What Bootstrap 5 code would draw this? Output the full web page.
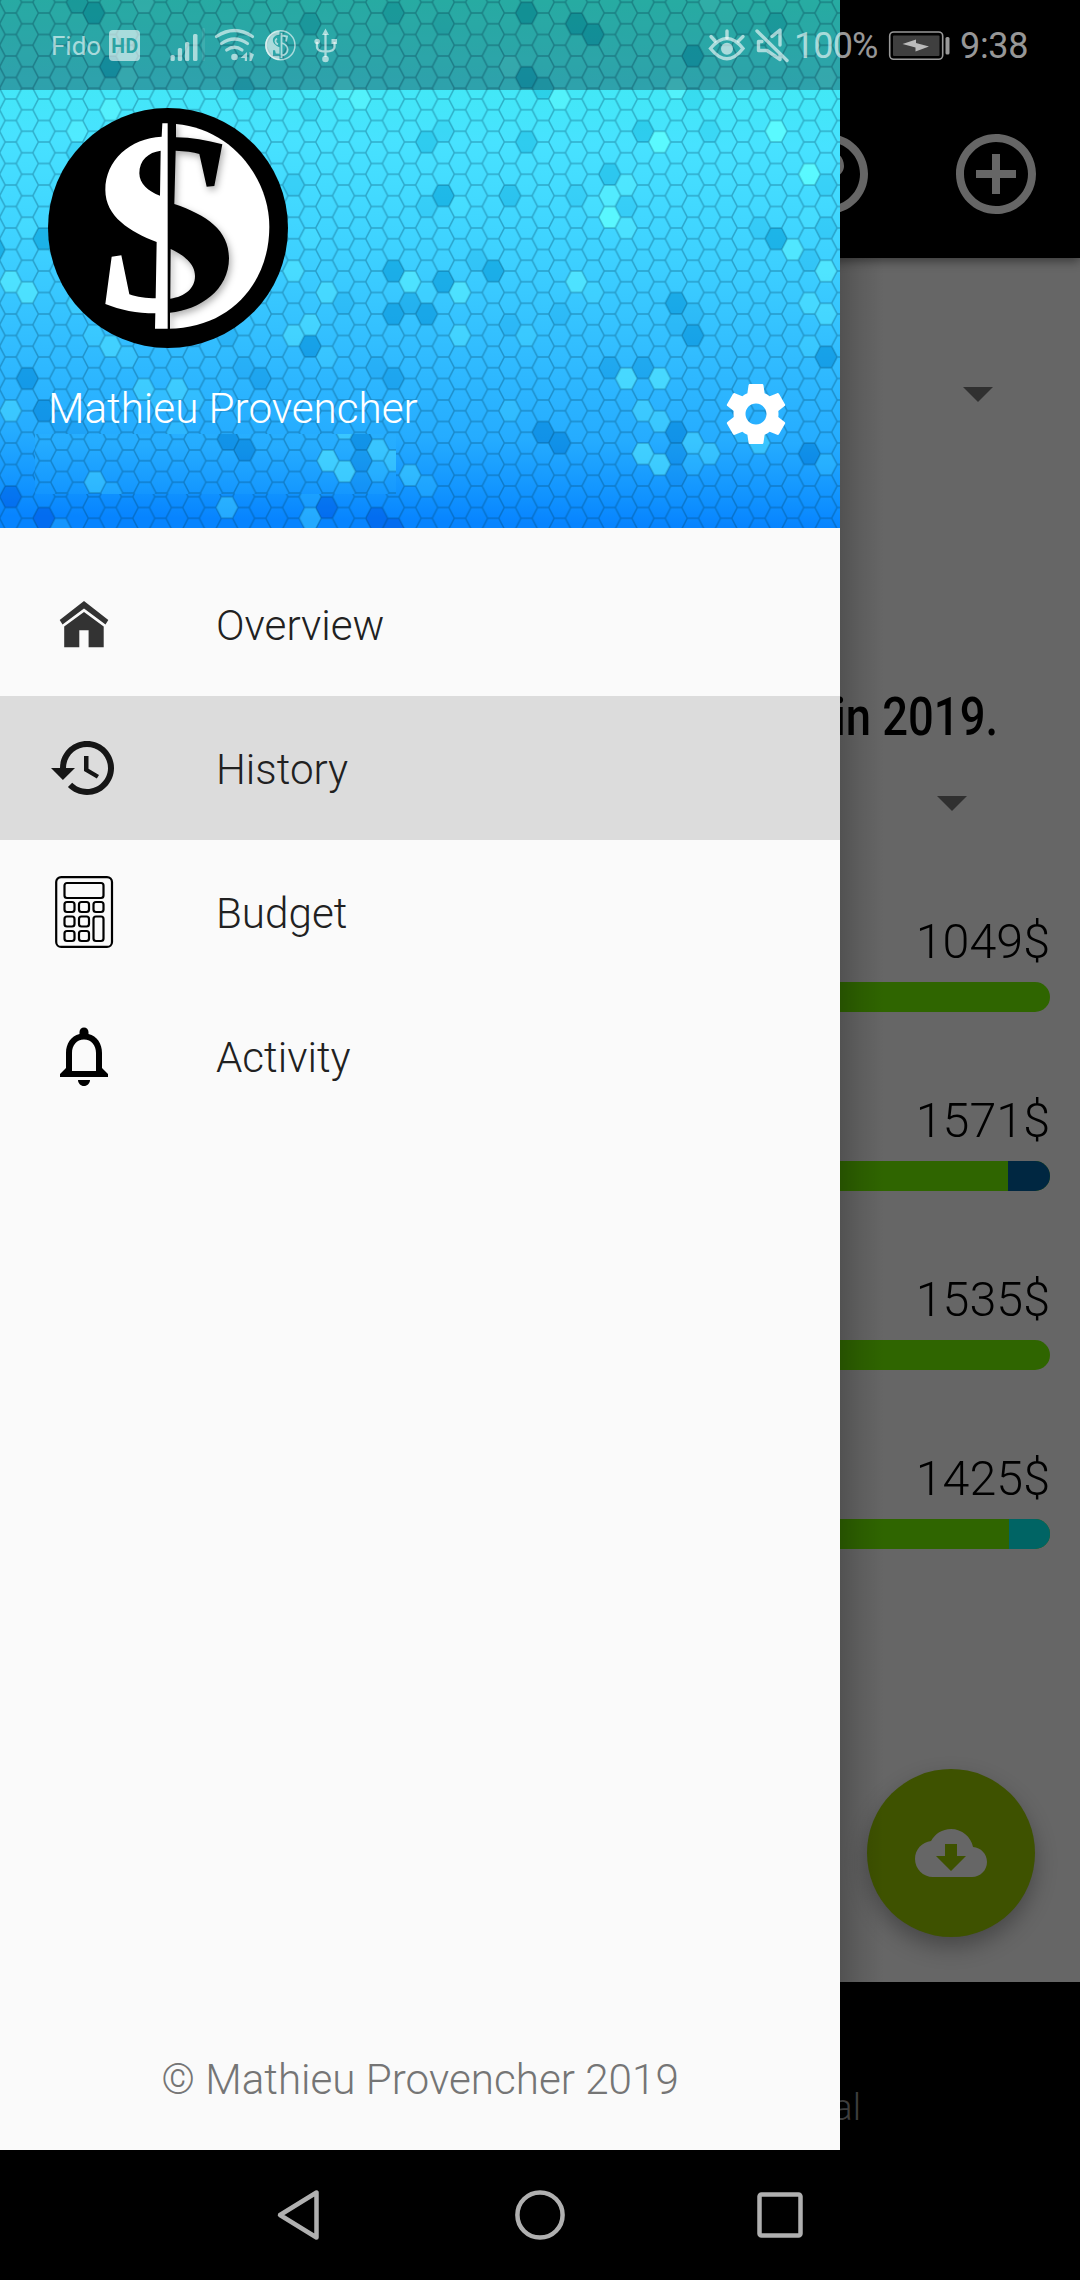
<!DOCTYPE html>
<html lang="en">
<head>
<meta charset="utf-8">
<meta name="viewport" content="width=device-width, initial-scale=1">
<title>History</title>
<link href="https://cdn.jsdelivr.net/npm/bootstrap@5.3.0/dist/css/bootstrap.min.css" rel="stylesheet">
<style>
  body{margin:0;background:#000;font-family:Roboto,"Liberation Sans",sans-serif;font-weight:300}
  svg{display:block;flex:none}
  .phone{width:1080px;height:2280px;overflow:hidden;background:#000}
  /* status bar */
  .statusbar{height:90px;z-index:30;color:rgba(255,255,255,.6);font-weight:400;line-height:92px}
  .statusbar .shade{width:840px;height:90px;background:rgba(0,0,0,.3);z-index:-1}
  .carrier{font-size:26px;padding-left:51px;width:109px}
  .clock{font-size:36px;letter-spacing:-.3px}
  .charge{width:93px;letter-spacing:-.9px}
  .time{width:120px}
  /* app behind the drawer */
  .appbar{height:258px;padding:126px 36px 0 0;gap:72px;box-shadow:0 3px 10px rgba(0,0,0,.45);z-index:2}
  .content-pane{height:1724px;background:#666;padding-right:30px;color:#000}
  .arrow-down{width:30px;height:15px;background:#303030;clip-path:polygon(0 0,100% 0,50% 100%)}
  .pick-year{padding:129px 57px 0 0}
  .pick-month{padding:47px 83px 0 0}
  .headline{font-size:54px;line-height:64px;height:64px;font-weight:500;margin-top:283px;padding-right:52px}
  .headline span{display:inline-block;transform:scaleX(.84);transform-origin:100% 50%}
  .month-row{height:179px}
  .amount{font-size:48.4px;line-height:68px;height:74px;white-space:nowrap}
  .track{height:30px;border-radius:15px;background:#2f6500}
  .months{padding-top:97px}
  .c-navy{background:#002741}
  .c-teal{background:#006464}
  .fab{right:45px;top:1769px;width:168px;height:168px;background:#3e5200;box-shadow:0 10px 22px rgba(0,0,0,.3);z-index:3}
  .tabbar{height:168px;color:#3d3d3d;font-size:37px;font-weight:300;line-height:44px;padding:104px 0 0 0;width:861px}
  .sysnav{height:130px;gap:190px;z-index:5}
  /* drawer */
  .scrim-edge{left:840px;top:258px;width:44px;height:1724px;z-index:4;background:linear-gradient(90deg,rgba(0,0,0,.2),rgba(0,0,0,.09) 45%,rgba(0,0,0,0))}
  .drawer{width:840px;height:2150px;background:#fafafa;z-index:20;color:#212121;font-size:42.2px}
  .drawer-head{height:528px;padding:108px 48px 0;color:#fff}
  .hexes{z-index:0}
  .avatar,.who{z-index:1}
  .who{height:72px;margin-top:30px;line-height:62px}
  .menu{padding-top:24px}
  .menu .nav-link{height:144px;padding:0 48px;gap:96px;color:inherit;line-height:50px}
  .menu .nav-link span{padding-top:3px}
  .menu .nav-link.active{background:#dcdcdc}
  .credit{color:#757575;line-height:50px;padding-bottom:45px}
</style>
<script src="https://cdn.jsdelivr.net/npm/bootstrap@5.3.0/dist/js/bootstrap.bundle.min.js"></script>
</head>
<body>
<div class="phone position-relative d-flex flex-column">

  <div class="statusbar position-absolute top-0 start-0 w-100 d-flex">
    <div class="shade position-absolute top-0 start-0"></div>
    <span class="carrier">Fido</span>
    <svg width="240" height="90" viewBox="109 0 240 90" fill="currentColor">
      <rect x="109" y="30" width="31" height="31" rx="4"/>
      <text x="124.7" y="52.6" text-anchor="middle" font-size="19.5" font-weight="700" fill="#2ba3a3" textLength="27">HD</text>
      <rect x="170.5" y="55" width="4.3" height="6" rx="1.5"/><rect x="177.8" y="48" width="4.3" height="13" rx="1.5"/><rect x="185" y="42" width="4.3" height="19" rx="1.5"/><rect x="193" y="34" width="4.5" height="27" rx="1.5"/><rect x="202" y="28" width="3" height="33" rx="1" opacity=".15"/>
      <g fill="none" stroke="currentColor" stroke-width="3.2" stroke-linecap="round"><path d="M216.500 36.500Q234.500 24.500 252.500 36.500M221.500 43.500Q234.500 34.500 247.500 43.500M226.700 50Q234.500 44.500 242 50"/></g>
      <circle cx="234.500" cy="57" r="3.3"/><path d="M247 52v9h-2.200v-3h-4.300zM249.500 52l4.500 2.500-2.500 6.500h-2z"/>
      <circle cx="280.500" cy="45.300" r="14.500" fill="none" stroke="currentColor" stroke-width="1.500"/>
      <path d="M279.500 31a14.500 14.500 0 0 0 0 29v-4.200h-6.500v-5.600h2l.8 3.200 3.700.4v-6.500c-9-3.500-8.500-11.800 0-12.500z" />
      <g fill="none" stroke="currentColor" stroke-width="1.800"><path d="M282 35.500l5 1-1 5M282 43c8 3 7 11 0 12.500M281.500 33v25M277 38.500c-2.500 1.500-2 4.500 1 6"/></g>
      <g fill="none" stroke="currentColor" stroke-width="2.300"><path d="M325.500 34v23M317 42v5q0 4.500 8.500 4.500M334.500 42v5q0 4.500-9 4.500"/></g>
      <path d="M325.500 28.500l3.500 6.500h-7zM331.500 39h5.500v5h-5.500z"/><circle cx="317.200" cy="41.500" r="2.800"/><circle cx="325.500" cy="59" r="3.300"/>
    </svg>
    <svg class="ms-auto" width="91" height="90" viewBox="703 0 91 90" fill="none" stroke="currentColor" stroke-width="3.400" stroke-linecap="round">
      <path d="M710.500 48.500Q727 28.500 743 48.500Q727 69 710.500 48.500z"/><circle cx="727" cy="48.800" r="6" fill="currentColor" stroke="none"/><path d="M727 31v7M711 36.500l4 4.500M743 36.500l-4.500 4.500"/>
      <path d="M757 31l30 29.500M762 41.500h-3.500v9h8.500L780 59.500v-5M772 36.500l8-6.500v15" stroke-linejoin="round"/>
    </svg>
    <span class="clock charge">100%</span>
    <svg width="73" height="90" viewBox="887 0 73 90" fill="none" stroke="currentColor">
      <rect x="889.700" y="32" width="53" height="27.300" rx="4" stroke-width="1.600"/><rect x="893" y="35.500" width="46.500" height="20.500" rx="1" fill="#3f3f3f" stroke="none"/><path d="M902.500 44l13.500-4.500v3.500l13 3.500-13.500 5v-4z" fill="#bbb" stroke="none"/><rect x="945.500" y="37" width="4" height="17.500" rx="1.500" fill="currentColor" stroke="none"/>
    </svg>
    <span class="clock time">9:38</span>
  </div>

  <header class="appbar position-relative d-flex justify-content-end bg-black">
    <svg width="96" height="96" viewBox="0 0 24 24" fill="#666"><path d="M11 18h2v-2h-2v2zm1-16C6.480 2 2 6.480 2 12s4.480 10 10 10 10-4.480 10-10S17.520 2 12 2zm0 18c-4.410 0-8-3.590-8-8s3.590-8 8-8 8 3.590 8 8-3.590 8-8 8zm0-14c-2.210 0-4 1.790-4 4h2c0-1.100.9-2 2-2s2 .9 2 2c0 2-3 1.750-3 5h2c0-2.250 3-2.500 3-5 0-2.210-1.790-4-4-4z"/></svg>
    <svg width="96" height="96" viewBox="0 0 24 24" fill="#666"><path d="M13 7h-2v4H7v2h4v4h2v-4h4v-2h-4V7zm-1-5C6.480 2 2 6.480 2 12s4.480 10 10 10 10-4.480 10-10S17.520 2 12 2zm0 18c-4.410 0-8-3.590-8-8s3.590-8 8-8 8 3.590 8 8-3.590 8-8 8z"/></svg>
  </header>

  <main class="content-pane">
    <div class="pick-year d-flex justify-content-end"><div class="arrow-down"></div></div>
    <div class="headline text-end"><span>in 2019.</span></div>
    <div class="pick-month d-flex justify-content-end"><div class="arrow-down"></div></div>
    <div class="months">
      <div class="month-row"><div class="amount text-end">1049$</div><div class="track"></div></div>
      <div class="month-row"><div class="amount text-end">1571$</div><div class="track d-flex justify-content-end overflow-hidden"><div class="c-navy" style="width:42px"></div></div></div>
      <div class="month-row"><div class="amount text-end">1535$</div><div class="track"></div></div>
      <div class="month-row"><div class="amount text-end">1425$</div><div class="track d-flex justify-content-end overflow-hidden"><div class="c-teal" style="width:41px"></div></div></div>
    </div>
  </main>
  <div class="fab position-absolute rounded-circle d-flex align-items-center justify-content-center">
    <svg width="72" height="72" viewBox="0 0 24 24" fill="#666"><path d="M19.350 10.040C18.670 6.590 15.640 4 12 4 9.110 4 6.600 5.640 5.350 8.040 2.340 8.360 0 10.910 0 14c0 3.310 2.690 6 6 6h13c2.760 0 5-2.240 5-5 0-2.640-2.050-4.780-4.650-4.960zM17 13l-5 5-5-5h3V9h4v4h3z"/></svg>
  </div>
  <div class="tabbar text-end">al</div>
  <div class="scrim-edge position-absolute"></div>

  <nav class="sysnav d-flex justify-content-center align-items-center bg-black">
    <svg width="50" height="54" viewBox="0 0 50 54" fill="none" stroke="#b0b0b0" stroke-width="4.500" stroke-linejoin="round"><path d="M5 27L41.500 4.500v45z"/></svg>
    <svg width="50" height="54" viewBox="0 0 50 54" fill="none" stroke="#b0b0b0" stroke-width="4.500"><circle cx="25" cy="27" r="22.600"/></svg>
    <svg width="50" height="54" viewBox="0 0 50 54" fill="none" stroke="#b0b0b0" stroke-width="4.500"><rect x="4.500" y="6.500" width="41" height="41" rx="2"/></svg>
  </nav>

  <aside class="drawer position-absolute top-0 start-0 d-flex flex-column">
    <div class="drawer-head position-relative overflow-hidden">
      <svg class="hexes position-absolute top-0 start-0" width="840" height="528" viewBox="0 0 840 528">
        <defs>
          <linearGradient id="sky" gradientUnits="userSpaceOnUse" x1="840" y1="0" x2="832" y2="528">
            <stop offset="0" stop-color="#38f6e8"/><stop offset=".17" stop-color="#42e8f6"/><stop offset=".28" stop-color="#47e2ff"/><stop offset=".5" stop-color="#3dd0ff"/><stop offset=".68" stop-color="#31bcff"/><stop offset=".84" stop-color="#25acff"/><stop offset=".95" stop-color="#1092ff"/><stop offset="1" stop-color="#0784ff"/>
          </linearGradient>
          <pattern id="comb" patternUnits="userSpaceOnUse" x="-6" y="2.250" width="33.280" height="21.500">
            <path fill="none" stroke-width="1.500" d="M0 0H5.550L11.100 10.750L5.550 21.500H0M11.100 10.750H22.200L27.750 0H33.280M22.200 10.750L27.750 21.500H33.280" stroke="#003c5a" stroke-opacity=".33"/>
          </pattern>
          <clipPath id="strip"><rect x="35" y="434" width="361" height="60"/></clipPath>
        </defs>
        <g id="field"><rect width="840" height="528" fill="url(#sky)"/><g id="tinted"></g><rect width="840" height="528" fill="url(#comb)"/></g>
        <g clip-path="url(#strip)"><use href="#field" transform="translate(-315 7)"/></g>
      </svg>
      <svg class="avatar position-relative" width="240" height="240" viewBox="144 324 720 720">
        <defs><filter id="soft" x="-20%" y="-20%" width="150%" height="150%"><feDropShadow dx="6" dy="10" stdDeviation="11" flood-opacity=".32"/></filter></defs>
        <circle cx="504" cy="684" r="360"/>
        <path fill="#fff" d="M505 372H528C690 385 808 530 808 680C808 850 690 985 505 986Z"/>
        <path filter="url(#soft)" fill-rule="evenodd" d="M500 366H528V412C575 413 620 420 667 433L643 558L620 560L598 462C580 456 555 453 527 452L523 612C620 645 687 690 687 775C687 870 600 930 510 938V990H500ZM512 747L511 896C555 890 585 865 585 828C585 790 550 765 512 747Z"/>
        <path fill="#fff" fill-rule="evenodd" d="M487 370H503V986H465L466 940C410 940 360 930 316 912L335 770L364 766L388 883C410 891 440 895 467 895L470 726C390 695 316 650 316 570C316 480 390 415 485 410ZM482 452C445 457 418 480 418 520C418 550 445 575 480 587Z"/>
      </svg>
      <div class="who position-relative d-flex justify-content-between">
        <span>Mathieu Provencher</span>
        <svg width="72" height="72" viewBox="0 0 24 24" fill="#fff"><path d="M19.430 12.980c.04-.32.07-.64.07-.98s-.03-.66-.07-.98l2.110-1.650c.19-.15.24-.42.12-.64l-2-3.460c-.12-.22-.39-.3-.61-.22l-2.490 1c-.52-.4-1.080-.73-1.690-.98l-.38-2.650C14.460 2.180 14.250 2 14 2h-4c-.25 0-.46.18-.49.42l-.38 2.650c-.61.25-1.170.59-1.690.98l-2.490-1c-.23-.09-.49 0-.61.22l-2 3.460c-.13.22-.07.49.12.64l2.110 1.650c-.04.32-.07.65-.07.98s.03.66.07.98l-2.110 1.650c-.19.15-.24.42-.12.64l2 3.460c.12.22.39.3.61.22l2.490-1c.52.4 1.080.73 1.690.98l.38 2.650c.03.24.24.42.49.42h4c.25 0 .46-.18.49-.42l.38-2.650c.61-.25 1.170-.59 1.690-.98l2.490 1c.23.09.49 0 .61-.22l2-3.460c.12-.22.07-.49-.12-.64l-2.110-1.650zM12 15.500c-1.930 0-3.500-1.570-3.500-3.500s1.570-3.500 3.500-3.500 3.500 1.570 3.500 3.500-1.570 3.500-3.500 3.500z"/></svg>
      </div>
    </div>
    <nav class="menu nav flex-column flex-grow-1 flex-nowrap">
      <a class="nav-link d-flex align-items-center">
        <svg width="72" height="72" fill="#333"><path d="M36 13L60.300 32L57.500 36.500L36 20.500L14.500 36.500L11.700 32Z"/><path d="M36 24L55.700 38.500V59.300H40.600V42.300H31.300V59.300H16.200V38.500Z"/></svg>
        <span>Overview</span></a>
      <a class="nav-link active d-flex align-items-center">
        <svg width="72" height="72" viewBox="0 0 24 24" fill="#161616"><path d="M13 3c-4.970 0-9 4.030-9 9H1l3.890 3.890.07.14L9 12H6c0-3.870 3.130-7 7-7s7 3.130 7 7-3.130 7-7 7c-1.930 0-3.680-.79-4.940-2.060l-1.420 1.420C8.270 19.990 10.510 21 13 21c4.970 0 9-4.030 9-9s-4.030-9-9-9zm-1 5v5l4.280 2.540.72-1.210-3.500-2.080V8H12z"/></svg>
        <span>History</span></a>
      <a class="nav-link d-flex align-items-center">
        <svg width="72" height="72" fill="none" stroke="#000" stroke-width="2.200"><rect x="8.200" y="1.100" width="55.800" height="69.800" rx="5"/><rect x="16.500" y="7" width="39" height="15" rx="2.500"/><rect x="16.500" y="26" width="10" height="10" rx="2.500"/><rect x="31" y="26" width="10" height="10" rx="2.500"/><rect x="16.500" y="40.500" width="10" height="10" rx="2.500"/><rect x="31" y="40.500" width="10" height="10" rx="2.500"/><rect x="16.500" y="55" width="10" height="10" rx="2.500"/><rect x="31" y="55" width="10" height="10" rx="2.500"/><rect x="45.500" y="26" width="10" height="10" rx="2.500"/><rect x="45.500" y="40.500" width="10" height="24.500" rx="2.500"/></svg>
        <span>Budget</span></a>
      <a class="nav-link d-flex align-items-center">
        <svg width="72" height="72" viewBox="0 0 24 24"><path d="M12 22c1.100 0 2-.9 2-2h-4c0 1.100.9 2 2 2zm6-6v-5c0-3.070-1.630-5.640-4.500-6.320V4c0-.83-.67-1.500-1.500-1.500s-1.500.67-1.500 1.500v.68C7.640 5.360 6 7.920 6 11v5l-2 2v1h16v-1l-2-2zm-2 1H8v-6c0-2.480 1.510-4.500 4-4.500s4 2.020 4 4.500v6z"/></svg>
        <span>Activity</span></a>
    </nav>
    <div class="credit text-center">© Mathieu Provencher 2019</div>
  </aside>
</div>
<script>
/* Tinted honeycomb cells, grouped by fill and blend mode: x,y pairs are snapped to the nearest cell. */
const shades = {
  '#73d9e8/1/multiply': '44,238 0,248 310,345 393,313 393,271 527,13 577,24 593,35 693,56 527,77 443,196 777,238 493,271 443,282 427,313 677,303 693,335 827,355 27,378 44,411 543,432 560,442 677,432 810,453 93,13 111,68',
  '#a6e6ef/1/multiply': '77,3 310,24 393,13 244,88 777,24 543,87 427,142 527,142 643,130 610,174 510,196 410,302 260,378 393,378 610,367 643,367 677,453',
  '#d4f2f7/1/multiply': '260,99 310,110 77,152 293,185 343,302 227,335 443,24 743,24 693,97 443,130 710,130 827,185 627,207 577,196 427,207 827,228 760,228 810,260 477,260 560,313 693,313 677,323 510,323 244,367 377,367 61,422 77,430 677,475',
  '#50d0f0/1/multiply': '11,497 44,517 327,507 377,517 393,527',
  '#6ff/.14/normal': '27,228 310,238 77,302 93,335 327,357 727,13 677,45 593,207 460,207 810,217 427,292 593,292 810,345 127,357 161,400 194,400 177,428 510,410 693,465 827,463 743,433 427,487 527,333 310,497 61,527',
  '#6ff/.3/normal': '144,3 127,77 343,88 77,130 293,271 327,292 310,323 293,335 111,345 710,3 510,67 727,77 827,77 627,185 627,228 810,303 827,313 460,335 144,389 177,389 11,411 227,507 310,517 410,473 643,410 660,421 693,442 710,453 760,443',
  '#6ff/.45/normal': '111,109 11,282 27,292 410,282 677,87 560,99 610,196 793,249 827,271 460,292 577,282 627,378 660,378 643,453 660,464 360,99',
  '#5fffff/.8/normal': '660,142 777,131 810,174 610,217'
};
const W = 16.64, H = 21.5, layer = document.getElementById('tinted');
for (const [key, list] of Object.entries(shades)) {
  const [color, alpha, blend] = key.split('/');
  let d = '';
  for (const pair of list.split(' ')) {
    const [x, y] = pair.split(',').map(Number);
    const col = Math.round((x + 6) / W);
    const base = col % 2 ? 2.25 : 13;
    const cx = -6 + col * W, cy = base + Math.round((y - base) / H) * H;
    d += `M${cx - 11.1} ${cy}l5.55-10.75h11.1l5.55 10.75-5.55 10.75h-11.1z`;
  }
  const p = document.createElementNS('http://www.w3.org/2000/svg', 'path');
  p.setAttribute('d', d); p.setAttribute('fill', color); p.setAttribute('fill-opacity', alpha);
  p.style.mixBlendMode = blend;
  layer.appendChild(p);
}
</script>
</body>
</html>
